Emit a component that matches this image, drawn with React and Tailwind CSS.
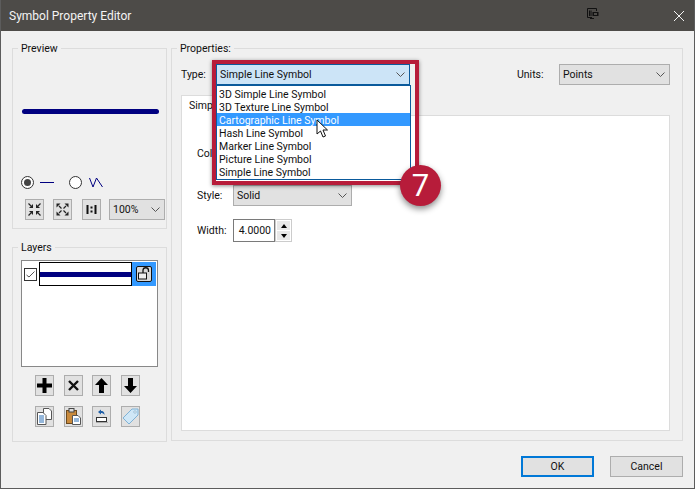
const font = "font-['Roboto','Noto_Sans',sans-serif]";

function Chevron() {
  return (
    <svg width="9" height="5" viewBox="0 0 9 5">
      <path d="M0.5 0.5 L4.5 4.5 L8.5 0.5" fill="none" stroke="#555" strokeWidth="1" />
    </svg>
  );
}

function Combo({ value, className = "" }) {
  return (
    <div className={`flex items-center justify-between border pl-[3px] pr-[4px] text-[10.5px] leading-none text-[#111] ${className}`}>
      <span className="pt-px">{value}</span>
      <Chevron />
    </div>
  );
}

function IconButton({ children, className = "" }) {
  return (
    <div className={`flex h-[21px] w-[19px] items-center justify-center border border-[#adadad] bg-[#e1e1e1] ${className}`}>
      {children}
    </div>
  );
}

function Group({ title, className = "", children }) {
  return (
    <fieldset className={`border border-[#dcdcdc] ${className}`}>
      <legend className="ml-[5px] h-[14px] px-[3px] text-[10.5px] leading-[16px] text-[#111]">{title}</legend>
      {children}
    </fieldset>
  );
}

const dropdownItems = [
  "3D Simple Line Symbol",
  "3D Texture Line Symbol",
  "Cartographic Line Symbol",
  "Hash Line Symbol",
  "Marker Line Symbol",
  "Picture Line Symbol",
  "Simple Line Symbol",
];

export default function App() {
  return (
    <div className={`relative flex h-[489px] w-[695px] flex-col overflow-hidden border-x border-b border-[#5c5c5c] bg-[#f0f0f0] ${font}`}>
      {/* title bar */}
      <div className="flex h-[31px] shrink-0 items-center bg-[#4d4b48] pl-[8px] pr-[10px] text-[12px] text-[#f4f4f4]">
        <span className="flex-1">Symbol Property Editor</span>
        <svg width="12" height="12" viewBox="0 0 12 12" className="mr-[75px] mt-[-3px]">
          <path d="M0.5 0.5 H9.5 V3 M0.5 0.5 V9.5 H5 M3 10.5 H7 M2.5 2.5 V8 M4 2.5 V8" fill="none" stroke="#111" />
          <rect x="5.5" y="4" width="6" height="4" fill="#111" />
          <rect x="7" y="5" width="3" height="2" fill="#4d4b48" />
        </svg>
        <svg width="10" height="10" viewBox="0 0 10 10">
          <path d="M0 0 L10 10 M10 0 L0 10" stroke="#f4f4f4" strokeWidth="1" />
        </svg>
      </div>

      <div className="flex flex-1 pl-[11px] pr-[11px] pt-[10px]">
        {/* left column */}
        <div className="flex w-[155px] shrink-0 flex-col gap-[11px]">
          <Group title="Preview" className="h-[188px]">
            <div className="ml-[9px] mr-[7px] mt-[54px] h-[5px] rounded-full bg-[#000080]" />
            <div className="ml-[8px] mt-[61px] flex h-[14px] items-center">
              <div className="flex h-[13px] w-[13px] items-center justify-center rounded-full border border-[#333] bg-white">
                <div className="h-[7px] w-[7px] rounded-full bg-[#444]" />
              </div>
              <div className="ml-[6px] h-px w-[14px] bg-[#000080]" />
              <div className="ml-[15px] h-[13px] w-[13px] rounded-full border border-[#333] bg-white" />
              <svg width="14" height="11" viewBox="0 0 14 11" className="ml-[7px]">
                <path d="M0.5 1 L4 10 L7.5 1 L13.5 10" fill="none" stroke="#000080" />
              </svg>
            </div>
            <div className="ml-[12px] mt-[10px] flex items-center">
              <IconButton>
                <svg width="13" height="13" viewBox="0 0 13 13">
                  <path d="M0.5 0.5 L3 3 M12.5 0.5 L10 3 M0.5 12.5 L3 10 M12.5 12.5 L10 10" fill="none" stroke="#222" strokeWidth="1.2" />
                  <path d="M5 5 H1 L5 1 Z M8 5 H12 L8 1 Z M5 8 H1 L5 12 Z M8 8 H12 L8 12 Z" fill="#222" />
                </svg>
              </IconButton>
              <IconButton className="ml-[9px]">
                <svg width="13" height="13" viewBox="0 0 13 13">
                  <path d="M3 3 L5.5 5.5 M10 3 L7.5 5.5 M3 10 L5.5 7.5 M10 10 L7.5 7.5" fill="none" stroke="#222" strokeWidth="1.2" />
                  <path d="M0.5 0.5 H4.5 L0.5 4.5 Z M12.5 0.5 H8.5 L12.5 4.5 Z M0.5 12.5 H4.5 L0.5 8.5 Z M12.5 12.5 H8.5 L12.5 8.5 Z" fill="#222" />
                </svg>
              </IconButton>
              <IconButton className="ml-[10px]">
                <svg width="11" height="9" viewBox="0 0 11 9">
                  <path d="M1.5 0 V9 M9.5 0 V9" stroke="#111" strokeWidth="2" />
                  <rect x="4.5" y="1.5" width="2" height="2" fill="#111" />
                  <rect x="4.5" y="5.5" width="2" height="2" fill="#111" />
                </svg>
              </IconButton>
              <Combo value="100%" className="ml-[8px] h-[21px] w-[56px] border-[#adadad] bg-[#e1e1e1]" />
            </div>
          </Group>

          <Group title="Layers" className="h-[202px]">
            <div className="mx-[8px] mt-[6px] h-[107px] border border-[#888] bg-white p-[1px]">
              <div className="flex h-[24px] items-center">
                <div className="ml-[1px] mr-[2px] flex h-[13px] w-[13px] shrink-0 items-center justify-center border border-[#333]">
                  <svg width="9" height="7" viewBox="0 0 9 7">
                    <path d="M0.5 4 L3 6 L8.5 0.5" fill="none" stroke="#555" />
                  </svg>
                </div>
                <div className="flex h-full w-[93px] items-center border border-black bg-white">
                  <div className="h-[5px] w-full bg-[#000080]" />
                </div>
                <div className="flex h-full w-[24px] items-center justify-center bg-[#3399ff]">
                  <svg width="16" height="16" viewBox="0 0 16 16">
                    <rect x="0.5" y="0.5" width="15" height="15" rx="1.5" fill="#d8d8d8" stroke="#111" />
                    <rect x="2.5" y="7" width="8" height="6" fill="#eee" stroke="#111" />
                    <path d="M7 7 V4.5 A2.5 2.5 0 0 1 12.5 4.5 V6" fill="none" stroke="#111" strokeWidth="1.3" />
                  </svg>
                </div>
              </div>
            </div>
            <div className="ml-[22px] mt-[8px] flex gap-[9px]">
              <IconButton>
                <svg width="15" height="15" viewBox="0 0 15 15">
                  <path d="M5.5 0 H9.5 V5.5 H15 V9.5 H9.5 V15 H5.5 V9.5 H0 V5.5 H5.5 Z" fill="#000" />
                </svg>
              </IconButton>
              <IconButton className="ml-[1px]">
                <svg width="11" height="11" viewBox="0 0 11 11">
                  <path d="M1 1 L10 10 M10 1 L1 10" stroke="#111" strokeWidth="2.4" />
                </svg>
              </IconButton>
              <IconButton>
                <svg width="13" height="15" viewBox="0 0 13 15">
                  <path d="M6.5 0 L13 7 H9 V15 H4 V7 H0 Z" fill="#000" />
                </svg>
              </IconButton>
              <IconButton className="ml-[1px]">
                <svg width="13" height="15" viewBox="0 0 13 15">
                  <path d="M6.5 15 L13 8 H9 V0 H4 V8 H0 Z" fill="#000" />
                </svg>
              </IconButton>
            </div>
            <div className="ml-[22px] mt-[10px] flex gap-[9px]">
              <IconButton>
                <svg width="15" height="17" viewBox="0 0 15 17">
                  <path d="M6.5 0.5 H12 L14.5 3 V11.5 H6.5 Z" fill="#fff" stroke="#555" />
                  <path d="M0.5 4.5 H6 L9 7.5 V16.5 H0.5 Z" fill="#fff" stroke="#555" />
                  <path d="M2 8 H7 M2 10 H7 M2 12 H7 M2 14 H7" stroke="#2a6fb5" />
                </svg>
              </IconButton>
              <IconButton className="ml-[1px]">
                <svg width="15" height="17" viewBox="0 0 15 17">
                  <rect x="0.5" y="2.5" width="10" height="13" fill="#c98a3c" stroke="#6b4a20" />
                  <rect x="3" y="0.5" width="5" height="3.5" fill="#ddd" stroke="#444" />
                  <path d="M6.5 7.5 H12 L14.5 10 V16.5 H6.5 Z" fill="#fff" stroke="#555" />
                  <path d="M8 11 H13 M8 13 H13" stroke="#2a6fb5" />
                </svg>
              </IconButton>
              <IconButton>
                <svg width="13" height="15" viewBox="0 0 13 15">
                  <path d="M3 3 L6 0.5 V2 C9 2 9.5 4 9.5 6 C8.5 4.5 7.5 4 6 4 V5.5 Z" fill="#1f5fa8" />
                  <rect x="1.5" y="8.5" width="10" height="4" fill="#fff" stroke="#333" />
                  <rect x="1" y="13" width="12" height="1" fill="#aaa" />
                </svg>
              </IconButton>
              <IconButton className="ml-[1px]">
                <svg width="17" height="17" viewBox="0 0 17 17">
                  <path d="M10 1 H16 V7 L7 16 L1 10 Z" fill="#cfe7f7" stroke="#7fb2d6" />
                  <circle cx="13" cy="4" r="1.2" fill="#fff" stroke="#6a9cc0" strokeWidth="0.6" />
                </svg>
              </IconButton>
            </div>
          </Group>
        </div>

        {/* properties */}
        <Group title="Properties:" className="ml-[4px] h-[400px] flex-1">
          <div className="ml-[9px] mr-[12px] mt-[9px] flex h-[21px] items-center text-[10.5px] text-[#111]">
            <span className="w-[35px] pt-px">Type:</span>
            <Combo value="Simple Line Symbol" className="h-[21px] w-[194px] border-[#0a5a9c] bg-[#cce4f7]" />
            <span className="ml-[107px] w-[42px] pt-px">Units:</span>
            <Combo value="Points" className="h-[21px] flex-1 border-[#adadad] bg-[#e1e1e1]" />
          </div>
          <div className="ml-[9px] mr-[12px] mt-[10px] flex flex-col">
            <div className="relative -mb-px h-[21px] w-[60px] border border-b-0 border-[#dcdcdc] bg-white pl-[7px] text-[10.5px] leading-[20px] text-[#111]">
              Simple
            </div>
            <div className="h-[316px] border border-[#dcdcdc] bg-white pl-[15px] pt-[27px] text-[10.5px] text-[#111]">
              <div className="flex h-[21px] items-center pt-px">Color:</div>
              <div className="mt-[21px] flex h-[21px] items-center">
                <span className="w-[36px] pt-px">Style:</span>
                <Combo value="Solid" className="h-[21px] w-[119px] border-[#adadad] bg-[#e1e1e1]" />
              </div>
              <div className="mt-[13px] flex h-[23px] items-center">
                <span className="w-[36px] pt-px">Width:</span>
                <div className="flex h-[23px] w-[42px] items-center justify-end border border-[#7a7a7a] pr-[3px] pt-px">4.0000</div>
                <div className="flex h-[23px] w-[17px] flex-col gap-px border border-[#ccc] p-px">
                  <div className="flex flex-1 items-center justify-center bg-[#e8e8e8]">
                    <div className="h-0 w-0 border-x-[3px] border-b-[4px] border-x-transparent border-b-black" />
                  </div>
                  <div className="flex flex-1 items-center justify-center bg-[#e8e8e8]">
                    <div className="h-0 w-0 border-x-[3px] border-t-[4px] border-x-transparent border-t-black" />
                  </div>
                </div>
              </div>
            </div>
          </div>
        </Group>
      </div>

      {/* bottom buttons */}
      <div className="flex h-[47px] shrink-0 items-start justify-end gap-[16px] pr-[11px] text-[10.5px] text-[#111]">
        <div className="mt-[14px] flex h-[21px] w-[73px] items-center justify-center border-2 border-[#0078d7] bg-[#e1e1e1]">OK</div>
        <div className="mt-[14px] flex h-[21px] w-[73px] items-center justify-center border border-[#adadad] bg-[#e1e1e1]">Cancel</div>
      </div>

      {/* open dropdown overlay */}
      <div className="absolute left-[215px] top-[85px] z-20 h-[95px] w-[195px] border border-[#0a5a9c] bg-white pt-px text-[10.5px] leading-[15px] text-[#111]">
        {dropdownItems.map((item) => (
          <div
            key={item}
            className={item === "Cartographic Line Symbol" ? "h-[13px] bg-[#3399ff] pl-[2px] text-white" : "h-[13px] pl-[2px]"}
          >
            {item}
          </div>
        ))}
      </div>

      {/* callout frame and step badge */}
      <div className="pointer-events-none absolute left-[211px] top-[60px] z-20 h-[125px] w-[207px] border-[4px] border-[#b71c3a] shadow-[0_1px_4px_rgba(0,0,0,0.45)]" />
      <div className="absolute left-[399px] top-[165px] z-20 flex h-[41px] w-[41px] items-center justify-center rounded-full bg-[#b71c3a] text-[31px] leading-none text-white shadow-[0_3px_6px_rgba(0,0,0,0.45)]">
        7
      </div>

      {/* mouse cursor */}
      <svg width="14" height="20" viewBox="0 0 14 20" className="absolute left-[315px] top-[119px] z-20">
        <path d="M1 1 V15 L4.5 12 L7 18 L9.5 17 L7 11 H11.5 Z" fill="#fff" stroke="#111" />
      </svg>
    </div>
  );
}
